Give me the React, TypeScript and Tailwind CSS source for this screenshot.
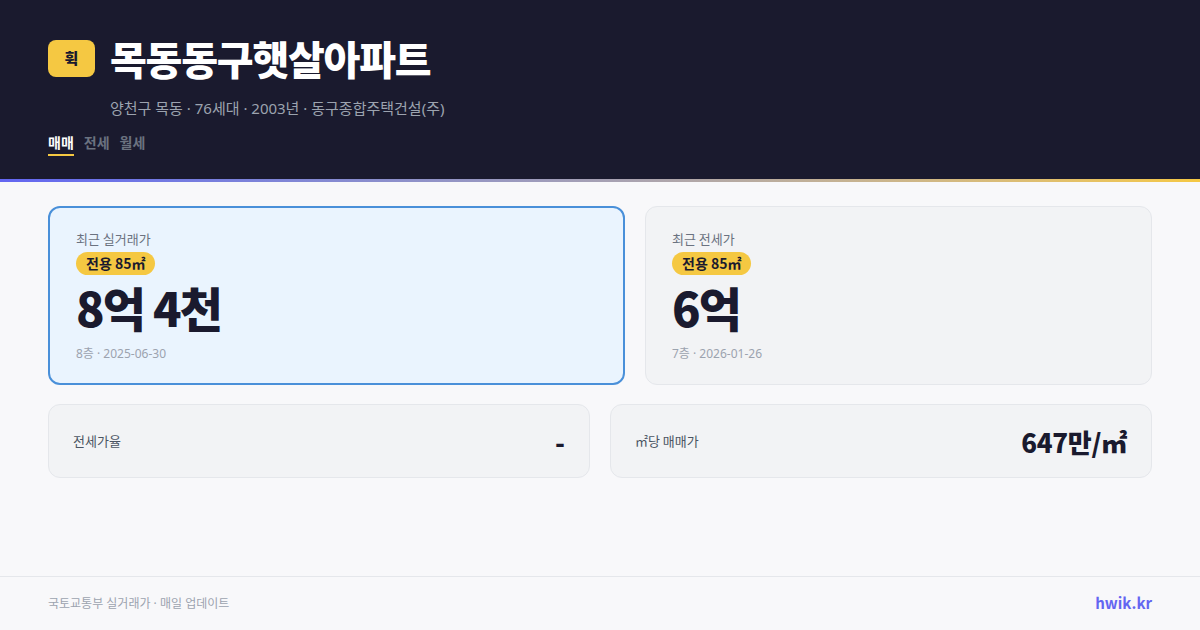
import React from "react";

const font = { fontFamily: '"Noto Sans CJK KR", "Noto Sans", sans-serif' };
const latinFirst = { fontFamily: '"Noto Sans", "Noto Sans CJK KR", sans-serif' };

export default function App() {
  return (
    <div className="w-[1200px] h-[630px] flex flex-col bg-[#f8f8fa] overflow-hidden" style={font}>
      <header className="h-[179px] bg-[#1a1a2e] px-12 pt-[36px] shrink-0">
        <div className="flex items-center gap-[15px]">
          <div className="w-[47px] h-[37px] rounded-[8px] bg-[#f5c842] flex items-center justify-center text-[15px] font-black text-[#1a1a2e]">휙</div>
          <h1 className="text-[40px] leading-[44px] font-black text-white tracking-[-0.03em]">목동동구햇살아파트</h1>
        </div>
        <div className="pl-[62px] mt-[18px] text-[15px] leading-[20px] text-[#9ca3af]" style={latinFirst}>양천구 목동 · 76세대 · 2003년 · 동구종합주택건설(주)</div>
        <div className="flex gap-[10px] mt-[14px] text-[14px] leading-[20px] font-bold">
          <div className="text-white border-b-2 border-[#f5c842] pb-[2px]">매매</div>
          <div className="text-[#6b7280]">전세</div>
          <div className="text-[#6b7280]">월세</div>
        </div>
      </header>
      <div className="h-[3px] bg-gradient-to-r from-[#6366f1] to-[#f5c842] shrink-0" />
      <main className="flex-1 px-12 pt-[24px] flex flex-col gap-[19px]">
        <div className="grid grid-cols-[577px_507px] gap-5">
          <div className="h-[179px] rounded-[12px] border-2 border-[#4a90d9] bg-[#eaf4fe] px-[26px] pt-[21px]">
            <div className="text-[13px] leading-[20px] text-[#6b7280]">최근 실거래가</div>
            <div className="inline-block mt-[3px] rounded-full bg-[#f5c842] px-[10px] text-[14px] leading-[23px] font-bold text-[#1a1a2e]">전용 85㎡</div>
            <div className="mt-[2px] text-[47px] leading-[60px] font-black text-[#1a1a2e] tracking-[-0.04em]">8억 4천</div>
            <div className="mt-[9px] text-[12px] leading-[16px] text-[#9ca3af]" style={latinFirst}>8층 · 2025-06-30</div>
          </div>
          <div className="h-[179px] rounded-[12px] border border-[#e5e7eb] bg-[#f2f3f5] px-[26px] pt-[22px]">
            <div className="text-[13px] leading-[20px] text-[#6b7280]">최근 전세가</div>
            <div className="inline-block mt-[3px] rounded-full bg-[#f5c842] px-[10px] text-[14px] leading-[23px] font-bold text-[#1a1a2e]">전용 85㎡</div>
            <div className="mt-[2px] text-[47px] leading-[60px] font-black text-[#1a1a2e] tracking-[-0.04em]">6억</div>
            <div className="mt-[9px] text-[12px] leading-[16px] text-[#9ca3af]" style={latinFirst}>7층 · 2026-01-26</div>
          </div>
        </div>
        <div className="grid grid-cols-2 gap-5">
          <div className="h-[74px] rounded-[12px] border border-[#e5e7eb] bg-[#f2f3f5] px-[24px] flex items-center justify-between">
            <div className="text-[13px] text-[#4b5563]">전세가율</div>
            <div className="text-[26px] font-black text-[#1a1a2e]">-</div>
          </div>
          <div className="h-[74px] rounded-[12px] border border-[#e5e7eb] bg-[#f2f3f5] px-[24px] flex items-center justify-between">
            <div className="text-[13px] text-[#4b5563]">㎡당 매매가</div>
            <div className="text-[26px] font-black text-[#1a1a2e] tracking-[-0.01em]">647만/㎡</div>
          </div>
        </div>
      </main>
      <footer className="h-[54px] shrink-0 border-t border-[#e5e7eb] px-12 flex items-center justify-between">
        <div className="text-[12px] text-[#9ca3af]" style={latinFirst}>국토교통부 실거래가 · 매일 업데이트</div>
        <div className="text-[15px] font-bold text-[#6366f1]">hwik.kr</div>
      </footer>
    </div>
  );
}
